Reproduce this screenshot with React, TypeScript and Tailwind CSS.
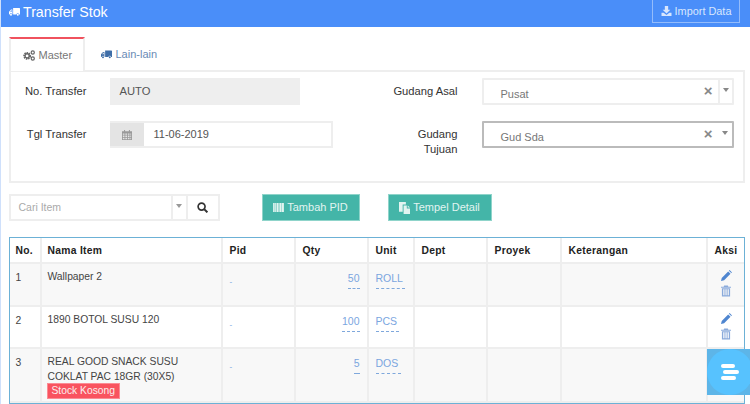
import { Fragment } from "react";

const font = "font-['Liberation_Sans',Arial,sans-serif]";

function Truck({ className }: { className?: string }) {
  return (
    <svg viewBox="0 0 16 12" className={className} fill="currentColor">
      <path d="M6 0h9a1 1 0 0 1 1 1v8.500h-1.300a2 2 0 0 0-3.900 0H6.200a2 2 0 0 0-.2-.6z" />
      <path d="M5 2.500H3L.6 5 0 6v3.500h.9a2 2 0 0 1 3.900 0h.2V9zM1.600 5.600 3.400 3.600H4v2z" />
      <circle cx="2.900" cy="10" r="1.400" />
      <circle cx="12.800" cy="10" r="1.400" />
    </svg>
  );
}

function Cogs({ className }: { className?: string }) {
  return (
    <svg viewBox="0 0 16 14" className={className} fill="none" stroke="currentColor">
      <circle cx="5.500" cy="7.500" r="3.800" strokeWidth="2.800" strokeDasharray="1.800 1" />
      <circle cx="5.500" cy="7.500" r="2.800" strokeWidth="1.800" />
      <circle cx="13" cy="3" r="2.100" strokeWidth="1.600" />
      <circle cx="13" cy="11" r="2.100" strokeWidth="1.600" />
    </svg>
  );
}

function Calendar({ className }: { className?: string }) {
  return (
    <svg viewBox="0 0 12 12" className={className} fill="currentColor">
      <path d="M0 1.500h2.500V0h1.200v1.500h4.600V0h1.200v1.500H12V12H0z" />
      <path
        d="M1 4.200h2v1.600H1zM4 4.200h2v1.600H4zM7 4.200h2v1.600H7zM10 4.200h1v1.600h-1zM1 6.700h2v1.600H1zM4 6.700h2v1.600H4zM7 6.700h2v1.600H7zM10 6.700h1v1.600h-1zM1 9.200h2v1.800H1zM4 9.200h2v1.800H4zM7 9.200h2v1.800H7zM10 9.200h1v1.800h-1z"
        fill="#e4e4e4"
      />
    </svg>
  );
}

function Download({ className }: { className?: string }) {
  return (
    <svg viewBox="0 0 12 12" className={className} fill="currentColor">
      <path d="M4 0h4v4.500h2.600L6 9 1.400 4.500H4z" />
      <path d="M0 8h2.600L6 10.800 9.400 8H12v4H0z" />
    </svg>
  );
}

function Search({ className }: { className?: string }) {
  return (
    <svg viewBox="0 0 12 12" className={className} fill="none" stroke="currentColor" strokeWidth="1.800">
      <circle cx="5" cy="5" r="3.800" />
      <path d="M7.800 7.800 11.300 11.300" strokeWidth="2.200" />
    </svg>
  );
}

function Barcode({ className }: { className?: string }) {
  return (
    <svg viewBox="0 0 12 10" className={className} fill="currentColor">
      <path d="M0 0h1.800v10H0zM2.300 0h1v10h-1zM3.800 0h1.800v10H3.800zM6 0h1v10H6zM7.400 0h1.800v10H7.400zM9.600 0H12v10H9.600z" />
    </svg>
  );
}

function Paste({ className }: { className?: string }) {
  return (
    <svg viewBox="0 0 12 13" className={className} fill="currentColor">
      <path d="M0 0h7.500v2.800H4v7.700H0z" />
      <path d="M5 3.800h3.500V7H12v6H5zM9.500 3.800 12 6H9.500z" />
    </svg>
  );
}

function Pencil({ className }: { className?: string }) {
  return (
    <svg viewBox="0 0 12 12" className={className} fill="currentColor">
      <path d="M0 12l.8-3.400L7.800 1.600l2.600 2.600-7 7zM8.600.8 9.400 0 12 2.600l-.8.800z" />
    </svg>
  );
}

function Trash({ className }: { className?: string }) {
  return (
    <svg viewBox="0 0 11 12" className={className} fill="currentColor">
      <path d="M3.500 0h4l.6 1.300H11v1H0v-1h2.900z" />
      <path fillRule="evenodd" d="M1 3h9v9H1zM2.500 4.200v6.600h1.300V4.200zM4.900 4.200v6.600h1.300V4.200zM7.300 4.200v6.600h1.300V4.200z" />
    </svg>
  );
}

function Editable({ value, width }: { value: string; width?: string }) {
  return (
    <span className={`inline-block border-b border-dashed border-[#7fa8dc] pb-[3px] text-[10.500px] leading-[14px] text-[#7ba6df] ${width ?? ""}`}>
      {value}
    </span>
  );
}

const colWidths = "grid-cols-[32px_181px_73px_73px_46px_73px_74px_146px_37px]";
const cell = "border-r-2 border-[#eeeeee] px-[7px] last:border-r-0";

function Row({
  no,
  name,
  qty,
  unit,
  unitWidth,
  striped,
  height,
  tag,
  actions,
}: {
  no: string;
  name: string[];
  qty: string;
  unit: string;
  unitWidth: string;
  striped: boolean;
  height: string;
  tag?: boolean;
  actions?: boolean;
}) {
  return (
    <div className={`grid ${colWidths} border-b-2 border-[#eeeeee] ${striped ? "bg-[#f8f8f8]" : "bg-white"} ${height} text-[10.300px] text-[#444444]`}>
      <div className={`${cell} pl-[6px] pt-[6px]`}>{no}</div>
      <div className={`${cell} pl-[6px] pt-[6px] leading-[14px]`}>
        {name.map((n) => (
          <div key={n} className="mb-[0.500px]">
            {n}
          </div>
        ))}
        {tag && (
          <span className="-mt-[1px] -ml-[1px] inline-block border border-[#fb8c94] bg-[#f9535f] px-[4px] text-[10.300px] leading-[14px] text-[#fbeeee]">
            Stock Kosong
          </span>
        )}
      </div>
      <div className={`${cell} pt-[12px] text-[8px] leading-[12px] text-[#6b9ce0]`}>-</div>
      <div className={`${cell} pt-[7px] text-right`}>
        <Editable value={qty} />
      </div>
      <div className={`${cell} pt-[7px]`}>
        <Editable value={unit} width={unitWidth} />
      </div>
      <div className={cell} />
      <div className={cell} />
      <div className={cell} />
      <div className="flex flex-col items-center pt-[6px]">
        {actions && (
          <Fragment>
            <Pencil className="h-[11px] w-[11px] text-[#4f86d0]" />
            <Trash className="mt-[3.500px] h-[12px] w-[10px] text-[#8aaadb]" />
          </Fragment>
        )}
      </div>
    </div>
  );
}

function Select({ value, focused, sep }: { value: string; focused?: boolean; sep?: boolean }) {
  return (
    <div className={`flex h-[27px] w-[252px] items-center rounded-[1px] border-2 ${focused ? "border-[#bbbbbb]" : "border-[#eeeeee]"} bg-white`}>
      <span className="ml-[17px] mt-[6px] flex-1 text-[11px] text-[#777777]">{value}</span>
      <span className="mr-[5px] -mt-[2px] text-[15px] leading-none font-bold text-[#888888]">×</span>
      <div className={`flex h-full w-[14px] justify-center pt-[8px] ${sep ? "border-l-2 border-[#eeeeee]" : ""}`}>
        <div className="h-0 w-0 border-x-[3px] border-t-[4px] border-x-transparent border-t-[#888888]" />
      </div>
    </div>
  );
}

export default function App() {
  return (
    <div className={`${font} relative h-[404px] w-[750px] overflow-hidden border-l-[1.500px] border-[#cfe0fb] bg-white`}>
      <header className="flex h-[27px] items-start justify-between bg-[#4a8ef9] pl-[8px] pr-[10px]">
        <div className="mt-[1.500px] flex items-center gap-[3px] text-white">
          <Truck className="mt-[1px] h-[10px] w-[11px]" />
          <span className="text-[14.200px] leading-[20px]">Transfer Stok</span>
        </div>
        <button className="flex h-[23px] w-[88px] items-center justify-center gap-[3px] border border-t-0 border-[#94bcfb] text-[10.900px] text-[#d8e6fd]">
          <Download className="h-[10px] w-[11px]" />
          Import Data
        </button>
      </header>

      <div className="pl-[7.500px] pr-[5px]">
        <div className="flex h-[43px] items-end pt-[9px]">
          <div className="z-10 -mb-[1px] flex h-[34px] w-[76px] items-center gap-[4px] border-x-2 border-t-2 border-[#eeeeee] border-t-[#f0525e] bg-white pl-[12px] text-[11px] text-[#777777]">
            <Cogs className="h-[11px] w-[12px] text-[#666666]" />
            Master
          </div>
          <div className="flex h-[34px] items-center gap-[4px] pt-[2px] pl-[16px] text-[11px] text-[#6a8bb5]">
            <Truck className="h-[9px] w-[11px] text-[#3f6ea8]" />
            Lain-lain
          </div>
        </div>

        <section className="flex h-[113px] border-2 border-[#eeeeee] pt-[6px]">
          <div className="w-[386px]">
            <div className="flex h-[27px] items-center">
              <span className="w-[76px] whitespace-nowrap text-right text-[11.200px] text-[#333333]">No. Transfer</span>
              <div className="ml-[23px] flex h-[27px] w-[190px] items-center bg-[#eeeeee] pl-[10px] text-[11.200px] text-[#555555]">AUTO</div>
            </div>
            <div className="mt-[16px] flex h-[27px] items-center">
              <span className="w-[76px] whitespace-nowrap text-right text-[11.200px] text-[#333333]">Tgl Transfer</span>
              <div className="ml-[23px] flex h-[27px] w-[223px] items-stretch border-2 border-l-0 border-[#eeeeee]">
                <div className="flex w-[34px] items-center justify-center bg-[#e4e4e4]">
                  <Calendar className="h-[10px] w-[10px] text-[#999999]" />
                </div>
                <div className="flex items-center pl-[10px] text-[11px] text-[#555555]">11-06-2019</div>
              </div>
            </div>
          </div>
          <div className="flex flex-col">
            <div className="flex h-[27px] items-center">
              <span className="flex w-[61px] justify-end whitespace-nowrap text-[11.200px] text-[#333333]">Gudang Asal</span>
              <div className="ml-[24px]">
                <Select value="Pusat" sep />
              </div>
            </div>
            <div className="mt-[16px] flex items-start">
              <span className="w-[61px] pt-[6px] text-right text-[11.200px] leading-[15px] text-[#333333]">
                Gudang
                <br />
                Tujuan
              </span>
              <div className="ml-[24px]">
                <Select value="Gud Sda" focused />
              </div>
            </div>
          </div>
        </section>

        <div className="mt-[11px] flex h-[27px] items-center">
          <div className="flex h-[27px] w-[211px] border-2 border-[#eeeeee]">
            <div className="flex flex-1 items-center pl-[8px] text-[10.500px] text-[#aaaaaa]">Cari Item</div>
            <div className="flex w-[15px] justify-center border-l-2 border-[#eeeeee] pt-[8px]">
              <div className="h-0 w-0 border-x-[3px] border-t-[4px] border-x-transparent border-t-[#999999]" />
            </div>
            <div className="flex w-[32px] items-center justify-center border-l-2 border-[#eeeeee]">
              <Search className="h-[11px] w-[11px] text-[#333333]" />
            </div>
          </div>
          <button className="ml-[42px] flex h-[27px] w-[98px] items-center justify-center gap-[3px] border border-[#8fd4ca] bg-[#44b5a8] text-[11px] text-[#e2f4f1]">
            <Barcode className="h-[9px] w-[11px]" />
            Tambah PID
          </button>
          <button className="ml-[28px] flex h-[27px] w-[104px] items-center justify-center gap-[3px] border border-[#8fd4ca] bg-[#44b5a8] text-[11px] text-[#e2f4f1]">
            <Paste className="h-[12px] w-[11px]" />
            Tempel Detail
          </button>
        </div>

        <div className="mt-[16px] h-[167px] border border-[#6cb1d6]">
          <div className={`grid ${colWidths} h-[26px] border-b-2 border-[#eeeeee] bg-white text-[10.300px] font-bold tracking-[0.300px] text-[#222222]`}>
            {["No.", "Nama Item", "Pid", "Qty", "Unit", "Dept", "Proyek", "Keterangan", "Aksi"].map((h, i) => (
              <div key={h} className={`${cell} ${i < 2 ? "pl-[6px]" : ""} flex items-center pt-[2px]`}>
                {h}
              </div>
            ))}
          </div>
          <Row no="1" name={["Wallpaper 2"]} qty="50" unit="ROLL" unitWidth="w-[29px]" striped height="h-[43px]" actions />
          <Row no="2" name={["1890 BOTOL SUSU 120"]} qty="100" unit="PCS" unitWidth="w-[23px]" striped={false} height="h-[42px]" actions />
          <Row
            no="3"
            name={["REAL GOOD SNACK SUSU", "COKLAT PAC 18GR (30X5)"]}
            qty="5"
            unit="DOS"
            unitWidth="w-[25px]"
            striped
            height="h-[54px]"
            tag
          />
        </div>
      </div>

      <div className="absolute right-0 top-[349px] h-[46px] w-[43px] bg-[#5db5e8]">
        <div className="flex h-[46px] w-[46px] flex-col items-start justify-center gap-[2px] rounded-full bg-[#57c2fe] pl-[14px]">
          <div className="h-[4px] w-[14px] rounded-full bg-white" />
          <div className="ml-[2px] h-[4px] w-[16px] rounded-full bg-white" />
          <div className="h-[4px] w-[15px] rounded-full bg-white" />
        </div>
      </div>
    </div>
  );
}
